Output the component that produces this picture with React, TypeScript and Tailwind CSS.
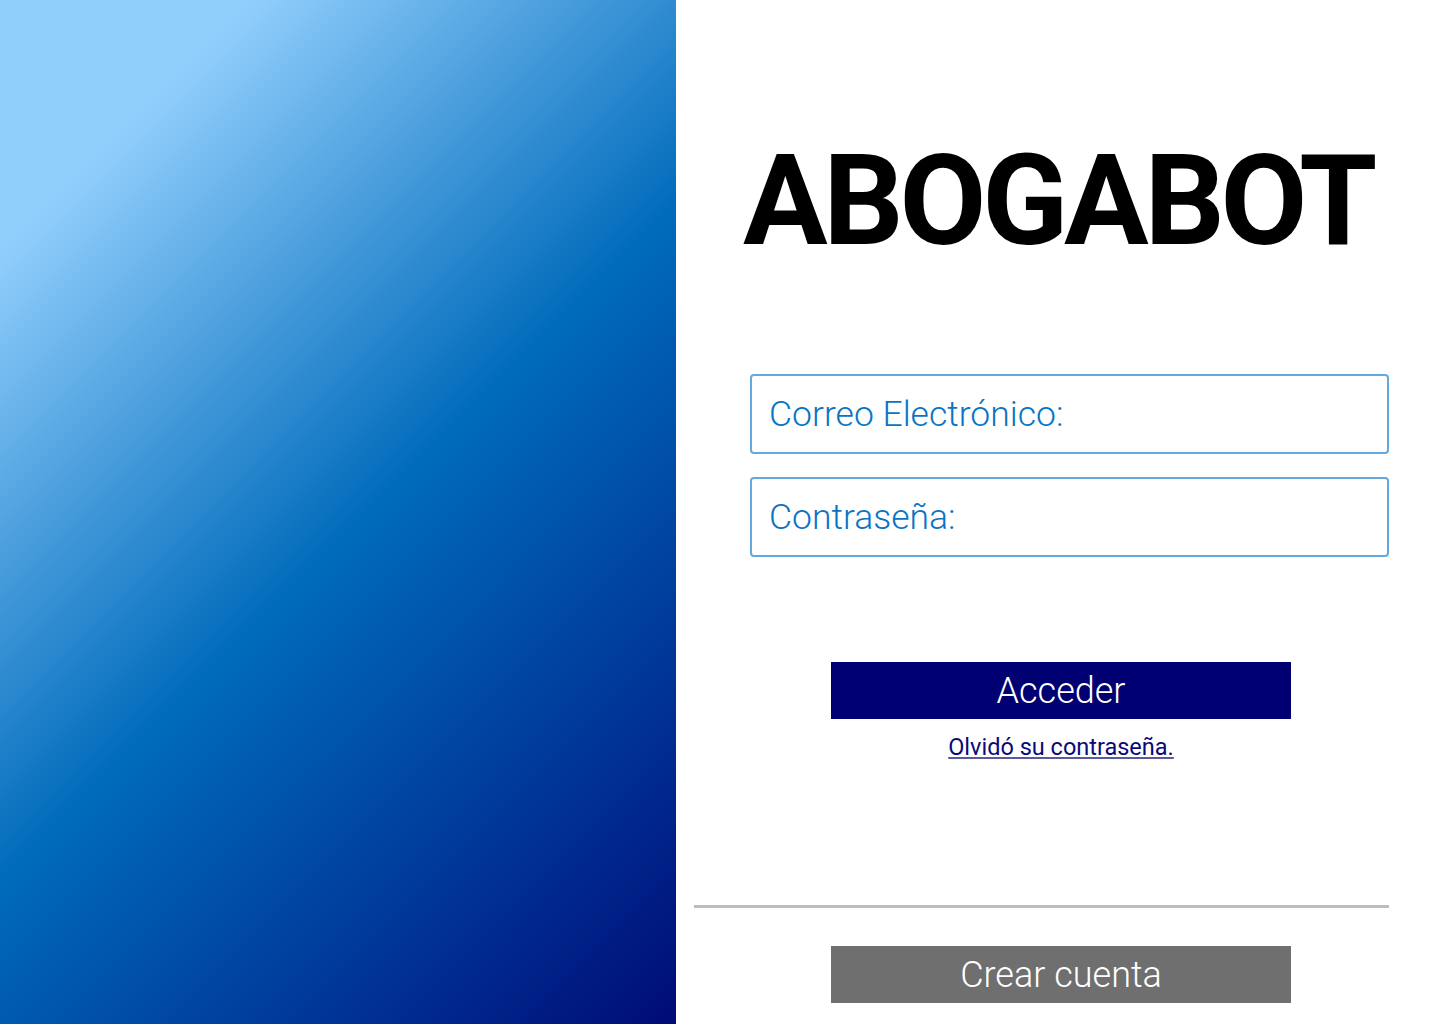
import React from 'react';

const font = { fontFamily: 'Roboto, "Liberation Sans", sans-serif' };

const LoginInput: React.FC<{ placeholder: string; type?: string }> = ({ placeholder, type = 'text' }) => (
  <input
    type={type}
    placeholder={placeholder}
    className="block w-[639px] h-[80px] rounded-[4px] border-2 border-[#64a9dd] bg-white px-[17px] text-[35.5px] font-light text-[#0a74c4] placeholder:text-[#0a74c4] outline-none"
  />
);

const App: React.FC = () => {
  return (
    <div className="flex h-[1024px] w-full overflow-hidden bg-white" style={font}>
      <div className="w-[676px] shrink-0 h-full bg-[linear-gradient(135deg,#90cefc_15%,#006bbb_52%,#000b78_100%)]" />

      <div className="flex-1 flex flex-col">
        <h1 className="mt-[138px] text-center text-[126px] leading-none font-bold tracking-[-4.2px] text-black">
          ABOGABOT
        </h1>

        <form className="flex flex-col pl-[18px] pr-[51px]" onSubmit={(e) => e.preventDefault()}>
          <div className="ml-[56px] mt-[110px] flex flex-col gap-[23px]">
            <LoginInput placeholder="Correo Electrónico:" type="email" />
            <LoginInput placeholder="Contraseña:" type="password" />
          </div>

          <div className="ml-[137px] mt-[105px] flex flex-col items-center w-[460px]">
            <button
              type="submit"
              className="w-[460px] h-[57px] bg-[#000072] text-white text-[36px] font-light leading-none"
            >
              Acceder
            </button>
            <a href="#" className="mt-[14px] text-[23.5px] leading-[28px] text-[#0a0a78] underline decoration-[#5a5aa0]">
              Olvidó su contraseña.
            </a>
          </div>

          <div className="mt-[144px] h-[3px] bg-[#bdbdbd]" />

          <div className="ml-[137px] mt-[38px]">
            <button
              type="button"
              className="w-[460px] h-[57px] bg-[#6f6f6f] text-white text-[36px] font-light leading-none"
            >
              Crear cuenta
            </button>
          </div>
        </form>
      </div>
    </div>
  );
};

export default App;
